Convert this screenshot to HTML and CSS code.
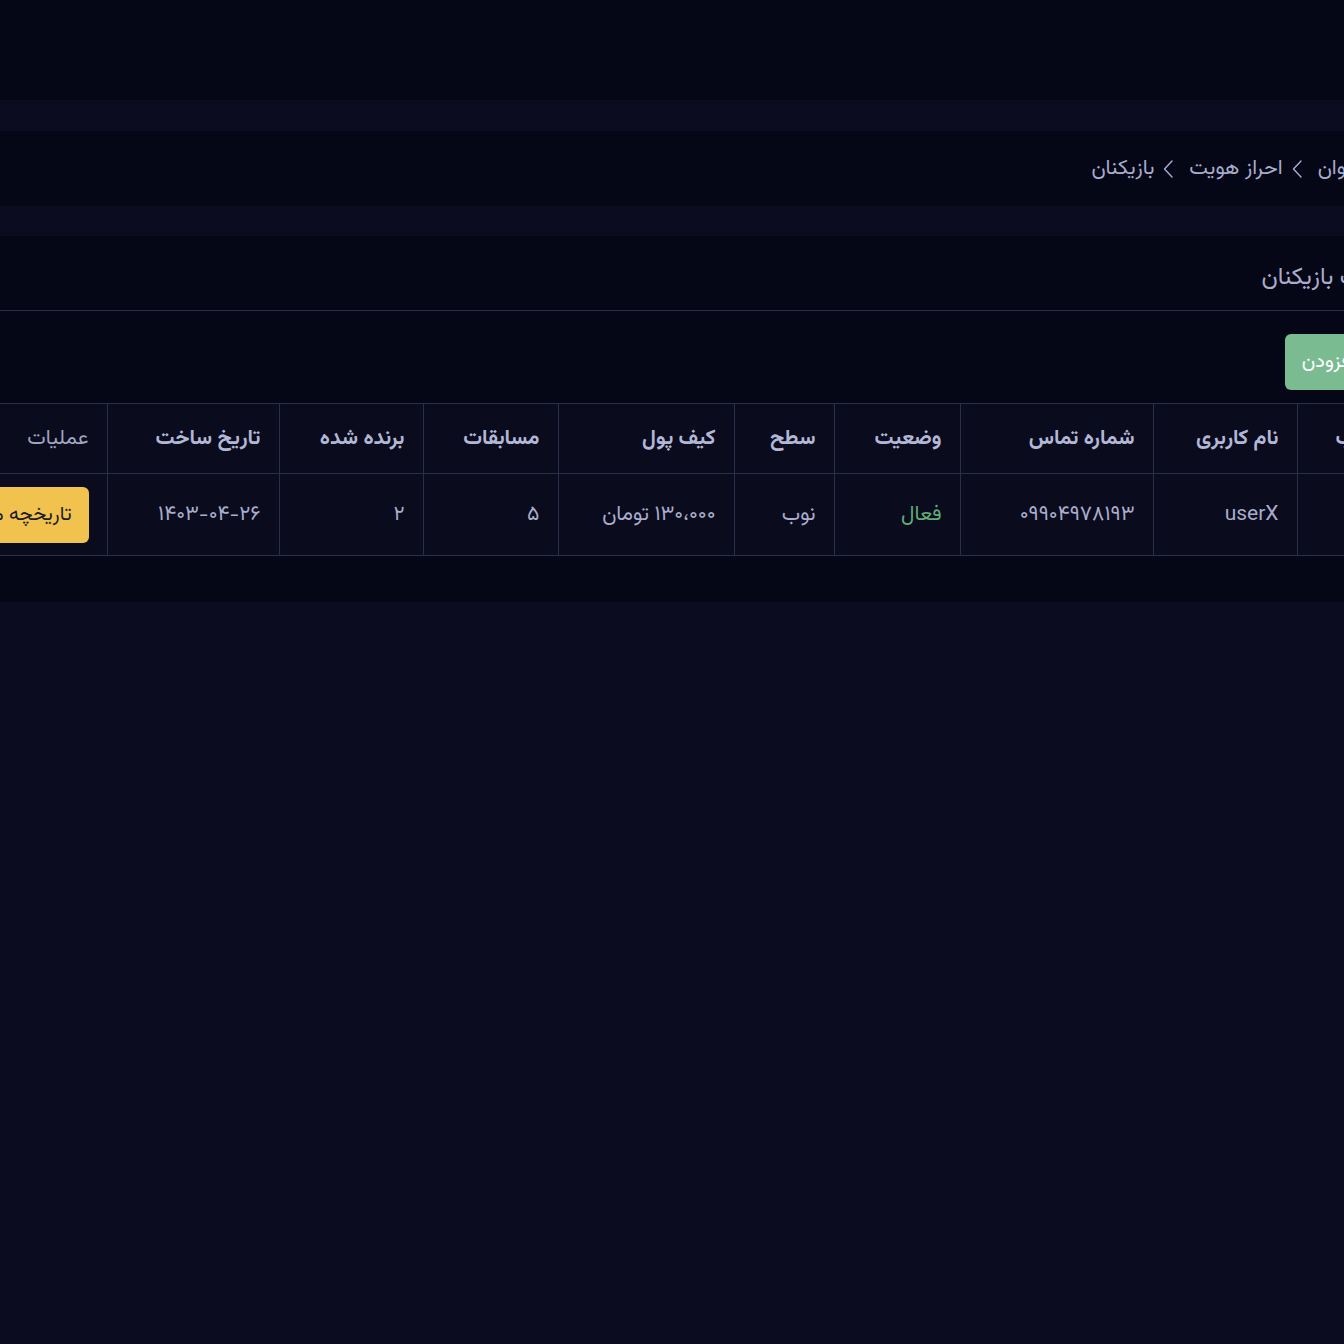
FILE: index.html
```html
<!DOCTYPE html>
<html lang="fa">
<head>
<meta charset="utf-8">
<title>بازیکنان</title>
<link rel="stylesheet" href="styles.css">
</head>
<body>
<header class="topbar"></header>
<div class="page" dir="rtl">
  <nav class="panel breadcrumb">
    <span class="crumb">پیشخوان</span>
    <svg class="chev" viewBox="0 0 10 18" width="10" height="18"><path d="M9 1 L1.5 9 L9 17" fill="none" stroke="currentColor" stroke-width="1.4" stroke-linecap="round" stroke-linejoin="round"/></svg>
    <span class="crumb">احراز هویت</span>
    <svg class="chev" viewBox="0 0 10 18" width="10" height="18"><path d="M9 1 L1.5 9 L9 17" fill="none" stroke="currentColor" stroke-width="1.4" stroke-linecap="round" stroke-linejoin="round"/></svg>
    <span class="crumb">بازیکنان</span>
  </nav>
  <section class="panel card">
    <div class="card-head">لیست بازیکنان</div>
    <div class="card-body">
      <div class="toolbar"><button class="btn btn-green">افزودن</button></div>
      <table class="grid">
        <colgroup>
          <col class="c-id"><col class="c-user"><col class="c-phone"><col class="c-status"><col class="c-level"><col class="c-wallet"><col class="c-matches"><col class="c-won"><col class="c-date"><col>
        </colgroup>
        <thead>
          <tr>
            <th>ترتیب</th>
            <th>نام کاربری</th>
            <th>شماره تماس</th>
            <th>وضعیت</th>
            <th>سطح</th>
            <th>کیف پول</th>
            <th>مسابقات</th>
            <th>برنده شده</th>
            <th>تاریخ ساخت</th>
            <th class="light">عملیات</th>
          </tr>
        </thead>
        <tbody>
          <tr>
            <td>۱</td>
            <td>userX</td>
            <td>۰۹۹۰۴۹۷۸۱۹۳</td>
            <td class="ok">فعال</td>
            <td>نوب</td>
            <td>۱۳۰،۰۰۰ تومان</td>
            <td>۵</td>
            <td>۲</td>
            <td>۱۴۰۳-۰۴-۲۶</td>
            <td><button class="btn btn-yellow">تاریخچه مسابقات</button></td>
          </tr>
        </tbody>
      </table>
    </div>
  </section>
</div>
</body>
</html>
```
FILE: styles.css
```css
html, body {
  margin: 0;
  padding: 0;
}
body {
  background: #0b0c1f;
  color: #a9adcb;
  font-family: "Vazirmatn", "Noto Sans Arabic", "DejaVu Sans", sans-serif;
  overflow: hidden;
  height: 1344px;
}
.topbar {
  height: 100px;
  background: #050616;
}
.page {
  width: 1560px;
  margin-left: -147px;
  padding-top: 31px;
  display: flex;
  flex-direction: column;
  gap: 30px;
}
.panel {
  background: #050616;
}
.breadcrumb {
  height: 75px;
  box-sizing: border-box;
  padding: 0 20px;
  display: flex;
  align-items: center;
  font-size: 21px;
}
.chev {
  color: #a9adcb;
  margin-right: 16px;
  margin-left: 9px;
}
.card {
  padding-bottom: 46px;
}
.card-head {
  height: 75px;
  box-sizing: border-box;
  border-bottom: 1px solid #2b2e48;
  padding: 10px 15px 0;
  display: flex;
  align-items: center;
  font-size: 24px;
}
.card-body {
  padding: 23px 12px 0;
}
.toolbar {
  display: flex;
  padding-right: 29px;
  margin-bottom: 13px;
}
.btn {
  font-family: inherit;
  font-size: 20px;
  border: none;
  border-radius: 6px;
  height: 56px;
  padding: 0 17px;
}
.btn-green {
  background: #7bbb92;
  color: #ffffff;
}
.btn-yellow {
  background: #f2c24f;
  color: #1c1c28;
}
.grid {
  width: 100%;
  table-layout: fixed;
  border-collapse: collapse;
  background: #0a0b1d;
}
.c-id { width: 104px; }
.c-user { width: 144px; }
.c-phone { width: 193px; }
.c-status { width: 126px; }
.c-level { width: 100px; }
.c-wallet { width: 176px; }
.c-matches { width: 135px; }
.c-won { width: 144px; }
.c-date { width: 172px; }
.grid th, .grid td {
  text-align: right;
  border: 1px solid #2b2e48;
  padding: 0 18px;
  white-space: nowrap;
  overflow: hidden;
}
.grid tr > :first-child { border-right: none; }
.grid tr > :last-child { border-left: none; }
.grid th {
  height: 69px;
  font-size: 21px;
  font-weight: 700;
  color: #b3b7d6;
}
.grid th.light {
  font-weight: 400;
  color: #a0a4c0;
}
.grid td {
  height: 81px;
  font-size: 21px;
}
.grid td.ok {
  color: #5fae75;
}
```
